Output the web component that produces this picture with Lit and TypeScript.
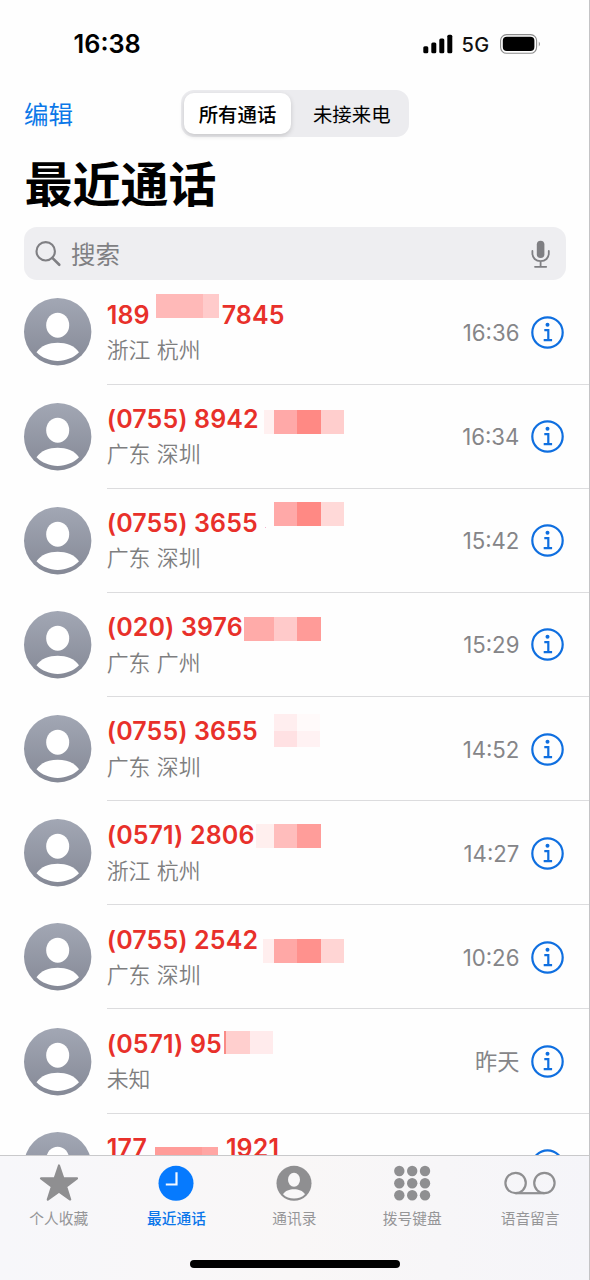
import { LitElement, html, css, svg } from "lit";
import { customElement, property } from "lit/decorators.js";

type Block = { x: number; y: number; w: number; h: number; c: string };
type Call = { number: string; tail?: string; gap?: number; place: string; time: string; mask: Block[] };

const b = (x: number, y: number, w: number, h: number, c: string): Block => ({ x, y, w, h, c });

// Mask blocks are measured from the left edge of the number and the top of the row.
const CALLS: Call[] = [
  { number: "189", tail: "7845", gap: 72, place: "浙江 杭州", time: "16:36",
    mask: [b(49, 14, 47, 24, "#ffb9b8"), b(96, 14, 16, 24, "#ffcbcb")] },
  { number: "(0755) 8942", place: "广东 深圳", time: "16:34",
    mask: [b(157, 25, 10, 24, "#fff0f0"), b(167, 25, 23, 24, "#ffa9a8"), b(190, 25, 24, 24, "#ff8984"), b(214, 25, 23, 24, "#ffcecd")] },
  { number: "(0755) 3655", place: "广东 深圳", time: "15:42",
    mask: [b(158, 38, 1, 1, "#f3b5d0"), b(167, 13, 23, 24, "#ffa9a8"), b(190, 13, 24, 24, "#ff8984"), b(214, 13, 23, 24, "#ffd9d8")] },
  { number: "(020) 3976", place: "广东 广州", time: "15:29",
    mask: [b(137, 24, 30, 24, "#ffaba9"), b(167, 24, 23, 24, "#ffcaca"), b(190, 24, 24, 24, "#ff9b98")] },
  { number: "(0755) 3655", place: "广东 深圳", time: "14:52",
    mask: [b(167, 17, 23, 17, "#ffeeef"), b(190, 17, 23, 17, "#fffafa"), b(167, 34, 23, 16, "#ffe1e3"), b(190, 34, 23, 16, "#fff2f3")] },
  { number: "(0571) 2806", place: "浙江 杭州", time: "14:27",
    mask: [b(149, 23, 18, 24, "#ffefee"), b(167, 23, 23, 24, "#ffbdbc"), b(190, 23, 24, 24, "#ff9d9a")] },
  { number: "(0755) 2542", place: "广东 深圳", time: "10:26",
    mask: [b(156, 34, 11, 24, "#ffeeee"), b(167, 34, 23, 24, "#ffa8a6"), b(190, 34, 24, 24, "#ff918d"), b(214, 34, 23, 24, "#ffd5d4")] },
  { number: "(0571) 95", place: "未知", time: "昨天",
    mask: [b(117, 22, 2, 23, "#f98b86"), b(119, 22, 24, 23, "#ffcfce"), b(143, 22, 23, 23, "#ffebec")] },
  { number: "177", tail: "1921", gap: 79, place: "", time: "",
    mask: [b(48, 33, 47, 24, "#ff9c99"), b(95, 33, 16, 24, "#ffa6a4")] },
];

const person = svg`
  <ellipse cx="33.7" cy="27.2" rx="11.5" ry="12.500" fill="#fff"/>
  <path d="M12.500 54.300C17 47.500 25 44.800 33.700 44.800S50.500 47.500 55 54.300C49.500 59.800 42 62.900 33.700 62.900S18 59.800 12.500 54.300Z" fill="#fff"/>`;

@customElement("call-row")
export class CallRow extends LitElement {
  @property({ attribute: false }) call!: Call;

  static styles = css`
    :host { display: flex; box-sizing: border-box; height: 104.16px; padding-left: 24px; flex: none; }
    .avatar { width: 67.4px; height: 67.4px; margin-top: 18.100px; flex: none; overflow: visible; }
    .body { position: relative; flex: 1; display: flex; margin-left: 15.300px; box-sizing: border-box; border-bottom: 1px solid #dcdcde; }
    .text { flex: 1; padding-top: 18.300px; }
    .number { display: flex; height: 32px; font: 560 25px/32px Inter, sans-serif; color: #e8302a; letter-spacing: .12px; white-space: pre; }
    .place { margin-top: 2.400px; font: 350 21.900px/32px "Noto Sans CJK SC", sans-serif; color: #7e7e80; white-space: pre; word-spacing: 1.500px; }
    .time { margin-top: 36.500px; font: 400 22.200px/32px Inter, "Noto Sans CJK SC", sans-serif; color: #858588; }
    .info { width: 33px; height: 33px; margin: 35.600px 26px 0 11.600px; flex: none; }
    .block { position: absolute; }
  `;

  render() {
    const c = this.call;
    return html`
      <svg class="avatar" viewBox="0 0 67.4 67.4">
        <defs><linearGradient id="g" x1="0" y1="0" x2="0" y2="1"><stop offset="0" stop-color="#a2a7b4"/><stop offset="1" stop-color="#858996"/></linearGradient></defs>
        <circle cx="33.7" cy="33.7" r="33.7" fill="url(#g)"/>${person}
      </svg>
      <div class="body">
        <div class="text">
          <div class="number"><span>${c.number}</span>${c.tail ? html`<span style="margin-left:${c.gap}px">${c.tail}</span>` : ""}</div>
          <div class="place">${c.place}</div>
        </div>
        <div class="time">${c.time}</div>
        <svg class="info" viewBox="0 0 33 33" fill="none" stroke="#0f6fe0" stroke-width="2.200">
          <circle cx="16.500" cy="16.500" r="15.200"/>
          <circle cx="16.500" cy="8.700" r="2" fill="#0f6fe0" stroke="none"/>
          <path d="M13.300 14.200H17.300V24M12.700 24.200H21.100"/>
        </svg>
        ${c.mask.map((m) => html`<i class="block" style="left:${m.x}px;top:${m.y}px;width:${m.w}px;height:${m.h}px;background:${m.c}"></i>`)}
      </div>`;
  }
}

const TABS = [
  { label: "个人收藏", icon: svg`<path d="M30 2.500L34.300 15.400H48L37.100 23.500L41.200 36.500L30 28.600L18.800 36.500L22.900 23.500L12 15.400H25.700Z" fill="#8f8f91" stroke="#8f8f91" stroke-width="2.200" stroke-linejoin="round"/>` },
  { label: "最近通话", active: true, icon: svg`<circle cx="30" cy="20.300" r="17.500" fill="#067afe"/><path d="M30.500 9.200V21.500H19.800" fill="none" stroke="#f4f8ff" stroke-width="2.200"/>` },
  { label: "通讯录", icon: svg`<circle cx="30" cy="20.300" r="17.500" fill="#8f8f91"/><ellipse cx="30" cy="16.700" rx="6" ry="7" fill="#f8f7f8"/><path d="M19 31.200C21.300 27.700 25.400 26.300 30 26.300S38.700 27.700 41 31.200C38.200 34.100 34.300 35.600 30 35.600S21.800 34.100 19 31.200Z" fill="#f8f7f8"/>` },
  { label: "拨号键盘", icon: svg`${[8, 20.2, 32.2].map((y) => [17.3, 30.2, 43].map((x) => svg`<circle cx=${x} cy=${y} r="5.200" fill="#8f8f91"/>`))}` },
  { label: "语音留言", icon: svg`<g fill="none" stroke="#8f8f91" stroke-width="2.200"><circle cx="15.600" cy="20" r="10.200"/><circle cx="44.400" cy="20" r="10.200"/><path d="M15.600 30.200H44.400"/></g>` },
];

@customElement("app-root")
export class AppRoot extends LitElement {
  static styles = css`
    :host { display: block; }
    .screen { position: relative; box-sizing: border-box; width: 590px; height: 1280px; overflow: hidden; background: #fefefe; display: flex; flex-direction: column; font-family: Inter, "Noto Sans CJK SC", sans-serif; }
    .edge { position: absolute; top: 0; right: 0; width: 1px; height: 100%; background: #c4c4c6; }
    .status { display: flex; align-items: center; box-sizing: border-box; height: 88px; padding: 0 48px 0 73.500px; flex: none; }
    .clock { flex: 1; font: 600 25.300px/30px Inter, sans-serif; color: #000; }
    .signal { width: 30px; height: 20px; }
    .net { margin: 1px 10.500px 0 8.500px; font: 500 20px/24px Inter, sans-serif; letter-spacing: .3px; color: #111; }
    .battery { width: 42px; height: 20px; }
    .nav { display: flex; align-items: center; height: 51px; padding-left: 24px; flex: none; }
    .edit { width: 157px; font: 400 24.500px/32px "Noto Sans CJK SC", sans-serif; color: #0b78e8; }
    .segments { display: flex; box-sizing: border-box; width: 227.500px; height: 47px; padding: 3px; border-radius: 13px; background: #ececef; }
    .segment { flex: 1; display: flex; align-items: center; justify-content: center; padding-left: 7px; border-radius: 10px; font: 400 19.400px/28px "Noto Sans CJK SC", sans-serif; color: #000; }
    .chosen { flex: none; box-sizing: border-box; width: 107px; padding-left: 0; font-weight: 500; background: #fff; box-shadow: 0 2px 5px rgba(0, 0, 0, .16); }
    .title { margin-left: 24.500px; height: 88px; flex: none; font: 700 48px/84px "Noto Sans CJK SC", sans-serif; color: #000; }
    .search { display: flex; align-items: center; box-sizing: border-box; width: 541.500px; height: 53px; margin-left: 24px; padding: 0 16px 0 11px; border-radius: 13px; background: #eeeef1; flex: none; }
    .glass { width: 28px; height: 28px; }
    .hint { flex: 1; margin-left: 8px; font: 400 24.500px/34px "Noto Sans CJK SC", sans-serif; color: #808083; }
    .mic { width: 20px; height: 30px; }
    .list { flex: 1; min-height: 0; overflow: hidden; display: flex; flex-direction: column; padding-top: .4px; }
    .tabs { box-sizing: border-box; height: 125px; flex: none; border-top: 1px solid #c9c9cb; background: linear-gradient(90deg, #f7f7fa, #f9f7f7 50%, #f5f5f9); display: flex; flex-direction: column; align-items: center; }
    .row { display: flex; width: 590px; height: 104px; }
    .tab { width: 117.900px; display: flex; flex-direction: column; align-items: center; padding-top: 7px; box-sizing: border-box; color: #959597; }
    .tab:first-child { width: 117.500px; }
    .tab-icon { width: 60px; height: 40px; }
    .label { margin-top: 3.500px; font: 400 14.700px/22px "Noto Sans CJK SC", sans-serif; }
    .active { color: #0a76ea; }
    .active .label { font-weight: 500; }
    .home { width: 210px; height: 8px; border-radius: 4px; background: #000; }
  `;

  render() {
    return html`
      <div class="screen">
        <div class="status">
          <div class="clock">16:38</div>
          <svg class="signal" viewBox="0 0 30 20"><rect x=".3" y="12.300" width="5" height="7" rx="1.500"/><rect x="8.300" y="8.500" width="5" height="10.800" rx="1.500"/><rect x="16.300" y="4.600" width="5" height="14.700" rx="1.500"/><rect x="24.300" y=".8" width="5" height="18.500" rx="1.500"/></svg>
          <div class="net">5G</div>
          <svg class="battery" viewBox="0 0 42 20"><rect x=".6" y=".6" width="36" height="18.700" rx="6" fill="none" stroke="#8b8b8b" stroke-width="1.100"/><rect x="2.800" y="2.800" width="31.600" height="14.300" rx="4"/><path d="M38.800 7.500Q41 10 38.800 12.400Z" fill="#888"/></svg>
        </div>
        <div class="nav">
          <div class="edit">编辑</div>
          <div class="segments"><div class="segment chosen">所有通话</div><div class="segment">未接来电</div></div>
        </div>
        <div class="title">最近通话</div>
        <div class="search">
          <svg class="glass" viewBox="0 0 28 28" fill="none" stroke="#7f7f83" stroke-width="2.100"><circle cx="10.700" cy="11.300" r="9.200"/><path d="M17.300 17.900L24.300 24.800" stroke-width="2.600" stroke-linecap="round"/></svg>
          <div class="hint">搜索</div>
          <svg class="mic" viewBox="0 0 20 30" fill="none" stroke="#7f7f83" stroke-width="1.800" stroke-linecap="round"><rect x="6.800" y="1.800" width="7.600" height="17.200" rx="3.800" fill="#7f7f83" stroke="none"/><path d="M2.400 12V14.200C2.400 19 5.800 22.200 10.600 22.200S18.800 19 18.800 14.200V12M10.600 22.200V27.800M5 27.800H16.200"/></svg>
        </div>
        <div class="list">${CALLS.map((c) => html`<call-row .call=${c}></call-row>`)}</div>
        <div class="tabs">
          <div class="row">${TABS.map((t) => html`<div class="tab ${t.active ? "active" : ""}"><svg class="tab-icon" viewBox="0 0 60 40">${t.icon}</svg><div class="label">${t.label}</div></div>`)}</div>
          <div class="home"></div>
        </div>
        <div class="edge"></div>
      </div>`;
  }
}
